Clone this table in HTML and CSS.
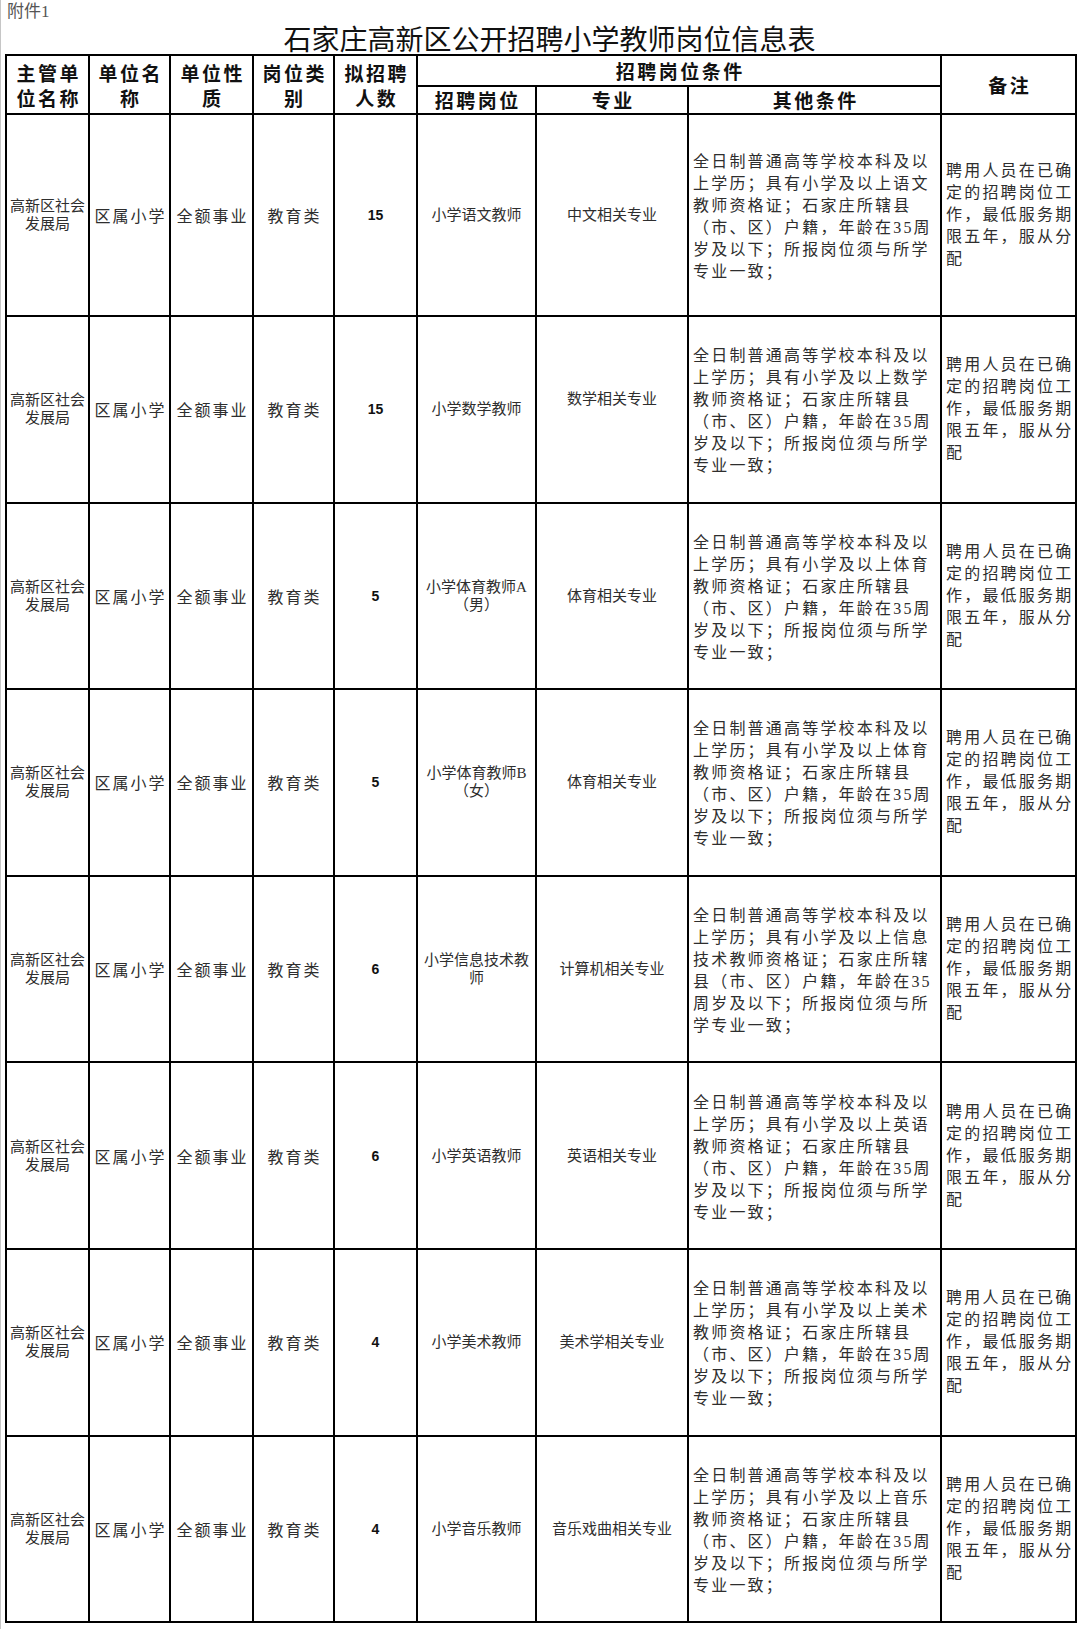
FILE: index.html
```html
<!DOCTYPE html>
<html lang="zh-CN">
<head>
<meta charset="utf-8">
<title>石家庄高新区公开招聘小学教师岗位信息表</title>
<link rel="stylesheet" href="styles.css">
</head>
<body>
<div class="page">
  <div class="attach">附件1</div>
  <h1 class="title">石家庄高新区公开招聘小学教师岗位信息表</h1>
  <table class="jobs">
    <colgroup>
      <col class="w-dept"><col class="w-unit"><col class="w-nature"><col class="w-type"><col class="w-num">
      <col class="w-post"><col class="w-major"><col class="w-other"><col class="w-note">
    </colgroup>
    <thead>
      <tr class="head-top">
        <th rowspan="2">主管单<br>位名称</th>
        <th rowspan="2">单位名<br>称</th>
        <th rowspan="2">单位性<br>质</th>
        <th rowspan="2">岗位类<br>别</th>
        <th rowspan="2">拟招聘<br>人数</th>
        <th colspan="3">招聘岗位条件</th>
        <th rowspan="2">备注</th>
      </tr>
      <tr class="head-sub">
        <th>招聘岗位</th>
        <th>专业</th>
        <th>其他条件</th>
      </tr>
    </thead>
    <tbody>
      <tr class="row-first">
        <td class="dept">高新区社会发展局</td>
        <td class="wide">区属小学</td>
        <td class="wide">全额事业</td>
        <td class="wide">教育类</td>
        <td class="num">15</td>
        <td class="post">小学语文教师</td>
        <td class="major">中文相关专业</td>
        <td class="other">全日制普通高等学校本科及以<br>上学历；具有小学及以上语文<br>教师资格证；石家庄所辖县<br>（市、区）户籍，年龄在35周<br>岁及以下；所报岗位须与所学<br>专业一致；</td>
        <td class="note">聘用人员在已确<br>定的招聘岗位工<br>作，最低服务期<br>限五年，服从分<br>配</td>
      </tr>
      <tr>
        <td class="dept">高新区社会发展局</td>
        <td class="wide">区属小学</td>
        <td class="wide">全额事业</td>
        <td class="wide">教育类</td>
        <td class="num">15</td>
        <td class="post">小学数学教师</td>
        <td class="major major-up">数学相关专业</td>
        <td class="other">全日制普通高等学校本科及以<br>上学历；具有小学及以上数学<br>教师资格证；石家庄所辖县<br>（市、区）户籍，年龄在35周<br>岁及以下；所报岗位须与所学<br>专业一致；</td>
        <td class="note">聘用人员在已确<br>定的招聘岗位工<br>作，最低服务期<br>限五年，服从分<br>配</td>
      </tr>
      <tr>
        <td class="dept">高新区社会发展局</td>
        <td class="wide">区属小学</td>
        <td class="wide">全额事业</td>
        <td class="wide">教育类</td>
        <td class="num">5</td>
        <td class="post">小学体育教师A<br>（男）</td>
        <td class="major">体育相关专业</td>
        <td class="other">全日制普通高等学校本科及以<br>上学历；具有小学及以上体育<br>教师资格证；石家庄所辖县<br>（市、区）户籍，年龄在35周<br>岁及以下；所报岗位须与所学<br>专业一致；</td>
        <td class="note">聘用人员在已确<br>定的招聘岗位工<br>作，最低服务期<br>限五年，服从分<br>配</td>
      </tr>
      <tr>
        <td class="dept">高新区社会发展局</td>
        <td class="wide">区属小学</td>
        <td class="wide">全额事业</td>
        <td class="wide">教育类</td>
        <td class="num">5</td>
        <td class="post">小学体育教师B<br>（女）</td>
        <td class="major">体育相关专业</td>
        <td class="other">全日制普通高等学校本科及以<br>上学历；具有小学及以上体育<br>教师资格证；石家庄所辖县<br>（市、区）户籍，年龄在35周<br>岁及以下；所报岗位须与所学<br>专业一致；</td>
        <td class="note">聘用人员在已确<br>定的招聘岗位工<br>作，最低服务期<br>限五年，服从分<br>配</td>
      </tr>
      <tr>
        <td class="dept">高新区社会发展局</td>
        <td class="wide">区属小学</td>
        <td class="wide">全额事业</td>
        <td class="wide">教育类</td>
        <td class="num">6</td>
        <td class="post">小学信息技术教<br>师</td>
        <td class="major">计算机相关专业</td>
        <td class="other">全日制普通高等学校本科及以<br>上学历；具有小学及以上信息<br>技术教师资格证；石家庄所辖<br>县（市、区）户籍，年龄在35<br>周岁及以下；所报岗位须与所<br>学专业一致；</td>
        <td class="note">聘用人员在已确<br>定的招聘岗位工<br>作，最低服务期<br>限五年，服从分<br>配</td>
      </tr>
      <tr>
        <td class="dept">高新区社会发展局</td>
        <td class="wide">区属小学</td>
        <td class="wide">全额事业</td>
        <td class="wide">教育类</td>
        <td class="num">6</td>
        <td class="post">小学英语教师</td>
        <td class="major">英语相关专业</td>
        <td class="other">全日制普通高等学校本科及以<br>上学历；具有小学及以上英语<br>教师资格证；石家庄所辖县<br>（市、区）户籍，年龄在35周<br>岁及以下；所报岗位须与所学<br>专业一致；</td>
        <td class="note">聘用人员在已确<br>定的招聘岗位工<br>作，最低服务期<br>限五年，服从分<br>配</td>
      </tr>
      <tr>
        <td class="dept">高新区社会发展局</td>
        <td class="wide">区属小学</td>
        <td class="wide">全额事业</td>
        <td class="wide">教育类</td>
        <td class="num">4</td>
        <td class="post">小学美术教师</td>
        <td class="major">美术学相关专业</td>
        <td class="other">全日制普通高等学校本科及以<br>上学历；具有小学及以上美术<br>教师资格证；石家庄所辖县<br>（市、区）户籍，年龄在35周<br>岁及以下；所报岗位须与所学<br>专业一致；</td>
        <td class="note">聘用人员在已确<br>定的招聘岗位工<br>作，最低服务期<br>限五年，服从分<br>配</td>
      </tr>
      <tr>
        <td class="dept">高新区社会发展局</td>
        <td class="wide">区属小学</td>
        <td class="wide">全额事业</td>
        <td class="wide">教育类</td>
        <td class="num">4</td>
        <td class="post">小学音乐教师</td>
        <td class="major">音乐戏曲相关专业</td>
        <td class="other">全日制普通高等学校本科及以<br>上学历；具有小学及以上音乐<br>教师资格证；石家庄所辖县<br>（市、区）户籍，年龄在35周<br>岁及以下；所报岗位须与所学<br>专业一致；</td>
        <td class="note">聘用人员在已确<br>定的招聘岗位工<br>作，最低服务期<br>限五年，服从分<br>配</td>
      </tr>
    </tbody>
  </table>
</div>
</body>
</html>
```

FILE: styles.css
```css
* {
  box-sizing: border-box;
}

body {
  margin: 0;
  background: #ffffff;
  font-family: "Liberation Serif", "Noto Sans CJK SC", serif;
  color: #2e2e2e;
}

.page {
  width: 1080px;
  min-height: 1629px;
  padding-left: 4px;
  border-left: 1px solid #c6c6c6;
}

.attach {
  height: 22px;
  padding: 2px 0 0 2px;
  font-size: 17px;
  line-height: 20px;
  color: #555555;
}

.title {
  margin: 0;
  height: 32px;
  padding-left: 14px;
  font-family: "Noto Sans CJK SC", sans-serif;
  font-size: 28px;
  font-weight: 400;
  line-height: 32px;
  text-align: center;
  color: #111111;
}

.jobs {
  width: 1070px;
  table-layout: fixed;
  border-collapse: collapse;
  border: 2px solid #000000;
}

.w-dept { width: 83px; }
.w-unit { width: 81px; }
.w-nature { width: 83px; }
.w-type { width: 81px; }
.w-num { width: 83px; }
.w-post { width: 119px; }
.w-major { width: 152px; }
.w-other { width: 253px; }
.w-note { width: 135px; }

.jobs th,
.jobs td {
  border: 2px solid #000000;
  vertical-align: middle;
  text-align: center;
}

.jobs th {
  padding: 0 0 0 2.5px;
  font-family: "Noto Sans CJK SC", sans-serif;
  font-size: 19px;
  font-weight: 700;
  letter-spacing: 2.5px;
  line-height: 25px;
  color: #111111;
}

.head-top {
  height: 31px;
}

.head-sub {
  height: 28px;
}

.head-top th[colspan] {
  line-height: 24px;
}

.head-sub th {
  line-height: 24px;
}

.jobs tbody tr {
  height: 186.6px;
}

.jobs tbody tr.row-first {
  height: 202px;
}

.jobs td {
  padding: 0 2px;
}

.dept {
  font-size: 15px;
  line-height: 18px;
}

.wide {
  font-size: 16px;
  letter-spacing: 2px;
  padding-left: 4px !important;
  white-space: nowrap;
}

.num {
  font-family: "Liberation Sans", "Noto Sans CJK SC", sans-serif;
  font-size: 14px;
  font-weight: 700;
  color: #111111;
}

.post,
.major {
  font-size: 15px;
  line-height: 18px;
  white-space: nowrap;
}

.major-up {
  padding-bottom: 20px !important;
}

.other,
.note {
  text-align: left !important;
  font-size: 16px;
  letter-spacing: 2.2px;
  line-height: 22px;
  white-space: nowrap;
  padding-left: 4px !important;
}

.other {
  padding-top: 4px !important;
}
```
